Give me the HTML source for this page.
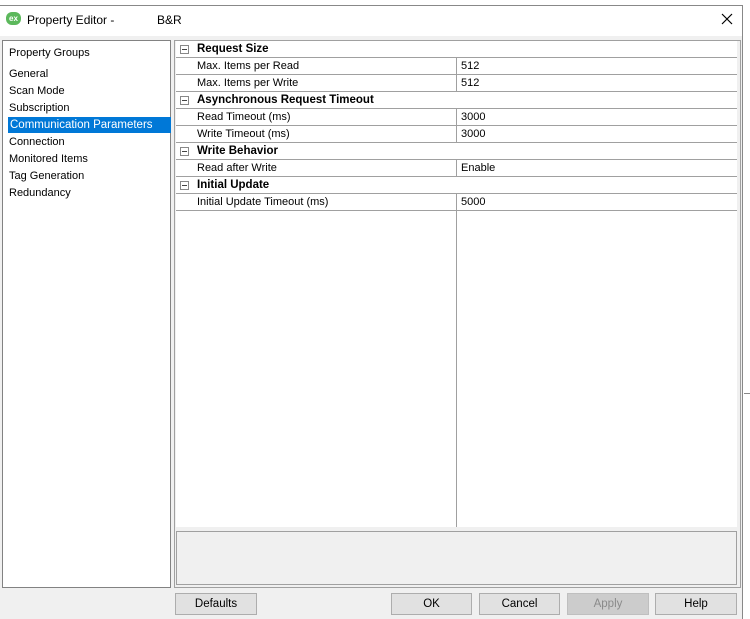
<!DOCTYPE html>
<html><head><style>
*{margin:0;padding:0;box-sizing:border-box}
body{width:750px;height:619px;background:#fff;font-family:"Liberation Sans",sans-serif;font-size:11px;color:#000;position:relative;overflow:hidden}
.a{position:absolute}
.win{left:0;top:5px;width:743px;height:614px;border-top:1px solid #888;border-right:1px solid #888;background:#f0f0f0}
.title{left:0;top:6px;width:742px;height:30px;background:#fff}
.list{left:2px;top:40px;width:169px;height:548px;background:#fff;border:1px solid #828282}
.list div{position:absolute;left:6px;font-size:11px}
.outer{left:174px;top:40px;width:567px;height:548px;border:1px solid #a0a0a0;background:#f0f0f0}
.grid{left:176px;top:41px;width:561px;height:486px;background:#fff}
.row{position:absolute;left:0;width:561px;height:17px;border-bottom:1px solid #a0a0a0}
.row span{position:absolute;top:2px}
.cat{font-weight:bold;font-size:11.5px}
.box{position:absolute;left:4px;top:4px;width:9px;height:9px;border:1px solid #888;background:#fff}
.box:after{content:"";position:absolute;left:1px;top:3px;width:5px;height:1px;background:#444}
.desc{left:176px;top:531px;width:561px;height:54px;border:1px solid #a0a0a0;background:#f0f0f0}
.btn{top:593px;height:22px;border:1px solid #adadad;background:#e1e1e1;text-align:center;line-height:20px;font-size:11.5px}
</style></head><body>
<div class="a win"></div>
<div class="a title"></div>
<div class="a" style="left:6px;top:12px;width:15px;height:13px;background:#5cb85c;border-radius:6px;color:#fff;font-size:8px;font-weight:bold;text-align:center;line-height:13px">ex</div>
<div class="a" style="left:27px;top:13px;font-size:12px">Property Editor -</div>
<div class="a" style="left:157px;top:13px;font-size:12px">B&amp;R</div>
<svg class="a" style="left:721px;top:13px" width="12" height="12"><path d="M1 1L11 11M11 1L1 11" stroke="#000" stroke-width="1.2"/></svg>
<div class="a list">
<div style="top:6px">Property Groups</div>
<div style="top:27px">General</div>
<div style="top:44px">Scan Mode</div>
<div style="top:61px">Subscription</div>
<div style="top:76px;left:5px;width:163px;height:16px;background:#0078d7;color:#fff;padding:2px 0 0 2px;font-size:11.5px">Communication Parameters</div>
<div style="top:95px">Connection</div>
<div style="top:112px">Monitored Items</div>
<div style="top:129px">Tag Generation</div>
<div style="top:146px">Redundancy</div>
</div>
<div class="a outer"></div>
<div class="a grid">
<div class="a" style="left:280px;top:0;width:1px;height:486px;background:#a0a0a0"></div>
<div class="row" style="top:0;background:#fff"><i class="box"></i><span class="cat" style="left:21px">Request Size</span></div>
<div class="row" style="top:17px"><span style="left:21px">Max. Items per Read</span><span style="left:285px">512</span></div>
<div class="row" style="top:34px"><span style="left:21px">Max. Items per Write</span><span style="left:285px">512</span></div>
<div class="row" style="top:51px;background:#fff"><i class="box"></i><span class="cat" style="left:21px">Asynchronous Request Timeout</span></div>
<div class="row" style="top:68px"><span style="left:21px">Read Timeout (ms)</span><span style="left:285px">3000</span></div>
<div class="row" style="top:85px"><span style="left:21px">Write Timeout (ms)</span><span style="left:285px">3000</span></div>
<div class="row" style="top:102px;background:#fff"><i class="box"></i><span class="cat" style="left:21px">Write Behavior</span></div>
<div class="row" style="top:119px"><span style="left:21px">Read after Write</span><span style="left:285px">Enable</span></div>
<div class="row" style="top:136px;background:#fff"><i class="box"></i><span class="cat" style="left:21px">Initial Update</span></div>
<div class="row" style="top:153px"><span style="left:21px">Initial Update Timeout (ms)</span><span style="left:285px">5000</span></div>
</div>
<div class="a" style="left:176px;top:58px;width:0;height:0"></div>
<div class="a desc"></div>
<div class="a btn" style="left:175px;width:82px">Defaults</div>
<div class="a btn" style="left:391px;width:81px">OK</div>
<div class="a btn" style="left:479px;width:81px">Cancel</div>
<div class="a btn" style="left:567px;width:82px;background:#ccc;color:#8a8a8a;border-color:#bfbfbf">Apply</div>
<div class="a btn" style="left:655px;width:82px">Help</div>
<div class="a" style="left:744px;top:393px;width:6px;height:1px;background:#888"></div>
</body></html>
